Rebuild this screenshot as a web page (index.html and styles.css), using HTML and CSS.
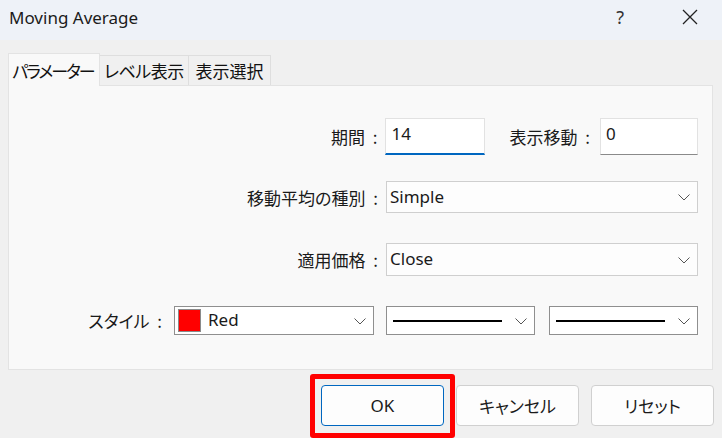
FILE: index.html
```html
<!DOCTYPE html>
<html lang="ja">
<head>
<meta charset="utf-8">
<title>Moving Average</title>
<link rel="stylesheet" href="styles.css">
</head>
<body>
<div class="dialog">
  <div class="titlebar">
    <div class="title">Moving Average</div>
    <div class="tb-actions">
      <span class="help">?</span>
      <svg class="close" width="16" height="16" viewBox="0 0 16 16"><path d="M1 1 L15 15 M15 1 L1 15" stroke="#222" stroke-width="1.3" fill="none"/></svg>
    </div>
  </div>

  <div class="content">
    <div class="tabs">
      <div class="tab active t1">パラメーター</div>
      <div class="tab t2">レベル表示</div>
      <div class="tab t3">表示選択</div>
    </div>
    <div class="panel">
      <div class="row row1">
        <span class="label">期間 :</span>
        <div class="input focused w100">14</div>
        <span class="label lbl-shift">表示移動 :</span>
        <div class="input w98">0</div>
      </div>
      <div class="row row2">
        <span class="label">移動平均の種別 :</span>
        <div class="combo light wide">
          <span class="val">Simple</span>
          <svg class="chev" width="12" height="7" viewBox="0 0 12 7"><polyline points="0.5,0.5 6,6 11.5,0.5" fill="none" stroke="#555" stroke-width="1"/></svg>
        </div>
      </div>
      <div class="row row3">
        <span class="label">適用価格 :</span>
        <div class="combo light wide">
          <span class="val">Close</span>
          <svg class="chev" width="12" height="7" viewBox="0 0 12 7"><polyline points="0.5,0.5 6,6 11.5,0.5" fill="none" stroke="#555" stroke-width="1"/></svg>
        </div>
      </div>
      <div class="row row4">
        <span class="label">スタイル :</span>
        <div class="combo dark w200">
          <span class="swatch"></span>
          <span class="val">Red</span>
          <svg class="chev" width="12" height="7" viewBox="0 0 12 7"><polyline points="0.5,0.5 6,6 11.5,0.5" fill="none" stroke="#555" stroke-width="1"/></svg>
        </div>
        <div class="combo dark w149 c2">
          <span class="line"></span>
          <svg class="chev" width="12" height="7" viewBox="0 0 12 7"><polyline points="0.5,0.5 6,6 11.5,0.5" fill="none" stroke="#555" stroke-width="1"/></svg>
        </div>
        <div class="combo dark w149 c3">
          <span class="line"></span>
          <svg class="chev" width="12" height="7" viewBox="0 0 12 7"><polyline points="0.5,0.5 6,6 11.5,0.5" fill="none" stroke="#555" stroke-width="1"/></svg>
        </div>
      </div>
    </div>

    <div class="buttons">
      <button class="btn primary highlighted">OK</button>
      <button class="btn jp">キャンセル</button>
      <button class="btn jp">リセット</button>
    </div>
  </div>
</div>
</body>
</html>
```

FILE: styles.css
```css
* { box-sizing: border-box; }
html, body {
  margin: 0;
  padding: 0;
}
body {
  width: 722px;
  height: 438px;
  overflow: hidden;
  background: #f0f0f0;
  font-family: "Noto Sans", "Noto Sans CJK JP", sans-serif;
  font-size: 17px;
  color: #1a1a1a;
}
.dialog {
  width: 722px;
  height: 438px;
  display: flex;
  flex-direction: column;
}
.titlebar {
  height: 40px;
  background: #eef2f8;
  display: flex;
  align-items: center;
  justify-content: space-between;
  padding: 0 0 6px 9px;
}
.title {
  font-size: 17px;
  color: #1b1b1b;
}
.tb-actions {
  display: flex;
  align-items: center;
}
.help {
  font-size: 18px;
  color: #333;
  margin-right: 58px;
}
.close {
  margin-right: 24px;
}
.content {
  padding: 13px 8px 0 8px;
  flex: 1;
  display: flex;
  flex-direction: column;
}
.tabs {
  display: flex;
  align-items: flex-end;
  height: 32px;
}
.tab {
  height: 30px;
  background: #f0f0f0;
  border: 1px solid #dedede;
  border-bottom: none;
  display: flex;
  align-items: center;
  justify-content: center;
  font-family: "Noto Sans CJK JP", sans-serif;
  font-feature-settings: "palt";
  font-size: 17px;
  color: #111;
  white-space: nowrap;
}
.tab.active {
  background: #f9f9f9;
  border-color: #e3e3e3;
  position: relative;
  z-index: 1;
  margin-bottom: -1px;
  height: 33px;
}
.t1 { width: 92px; letter-spacing: -2px; padding-right: 2px; }
.t2 { width: 89px; border-left: none; letter-spacing: -0.5px; }
.t3 { width: 82px; border-left: none; }
.panel {
  height: 285px;
  background: #f9f9f9;
  border: 1px solid #e3e3e3;
  margin-right: 1px;
  padding: 32px 14px 0 0;
  display: flex;
  flex-direction: column;
}
.row {
  display: flex;
  justify-content: flex-end;
  align-items: center;
}
.row1 { height: 37px; }
.row2 { height: 32px; margin-top: 26px; }
.row3 { height: 33px; margin-top: 30px; }
.row4 { height: 29px; margin-top: 30px; }
.label {
  font-family: "Noto Sans CJK JP", sans-serif;
  font-feature-settings: "palt";
  font-size: 17px;
  color: #1a1a1a;
  margin-right: 8px;
  white-space: nowrap;
  word-spacing: 4px;
}
.lbl-shift { margin-left: 24px; margin-right: 10px; }
.row4 .label { margin-right: 12px; }
.input {
  height: 37px;
  background: #fff;
  border: 1px solid #e2e2e2;
  border-bottom: 1px solid #8a8a8a;
  padding: 0 5px 6px;
  display: flex;
  align-items: center;
  font-size: 17px;
}
.input.focused {
  border-bottom: 2px solid #0067c0;
  padding-bottom: 5px;
}
.w100 { width: 100px; }
.w98 { width: 98px; }
.combo {
  height: 100%;
  background: #fff;
  display: flex;
  align-items: center;
  padding: 0 7px 0 3px;
}
.combo.light { border: 1px solid #cfcfcf; background: #fdfdfd; }
.combo.dark { border: 1px solid #8f8f8f; }
.combo .val { flex: 1; font-size: 17px; padding-bottom: 2px; }
.wide { width: 312px; }
.w200 { width: 200px; margin-right: 12px; }
.w149 { width: 149px; }
.c2 { margin-right: 14px; }
.swatch {
  width: 23px;
  height: 23px;
  background: #ff0000;
  border: 1px solid #8a8a8a;
  margin-right: 7px;
}
.line {
  flex: 1;
  height: 2px;
  background: #000;
  margin: 1px 13px 0 3px;
}
.chev { flex: none; margin-top: 1px; }
.buttons {
  display: flex;
  justify-content: flex-end;
  gap: 12px;
  margin-top: 15px;
}
.btn {
  width: 123px;
  height: 41px;
  background: #fdfdfd;
  border: 1px solid #d0d0d0;
  border-radius: 4px;
  font-family: "Noto Sans", "Noto Sans CJK JP", sans-serif;
  font-size: 17px;
  color: #1a1a1a;
  padding: 0;
}
.btn.jp {
  font-family: "Noto Sans CJK JP", sans-serif;
  font-feature-settings: "palt";
}
.btn.primary {
  border-color: #0067c0;
}
.btn.highlighted {
  position: relative;
}
.btn.highlighted::after {
  content: "";
  position: absolute;
  left: -12px;
  right: -12px;
  top: -12px;
  bottom: -13px;
  border: 5px solid #ff0000;
  border-radius: 3px;
  pointer-events: none;
}
```
